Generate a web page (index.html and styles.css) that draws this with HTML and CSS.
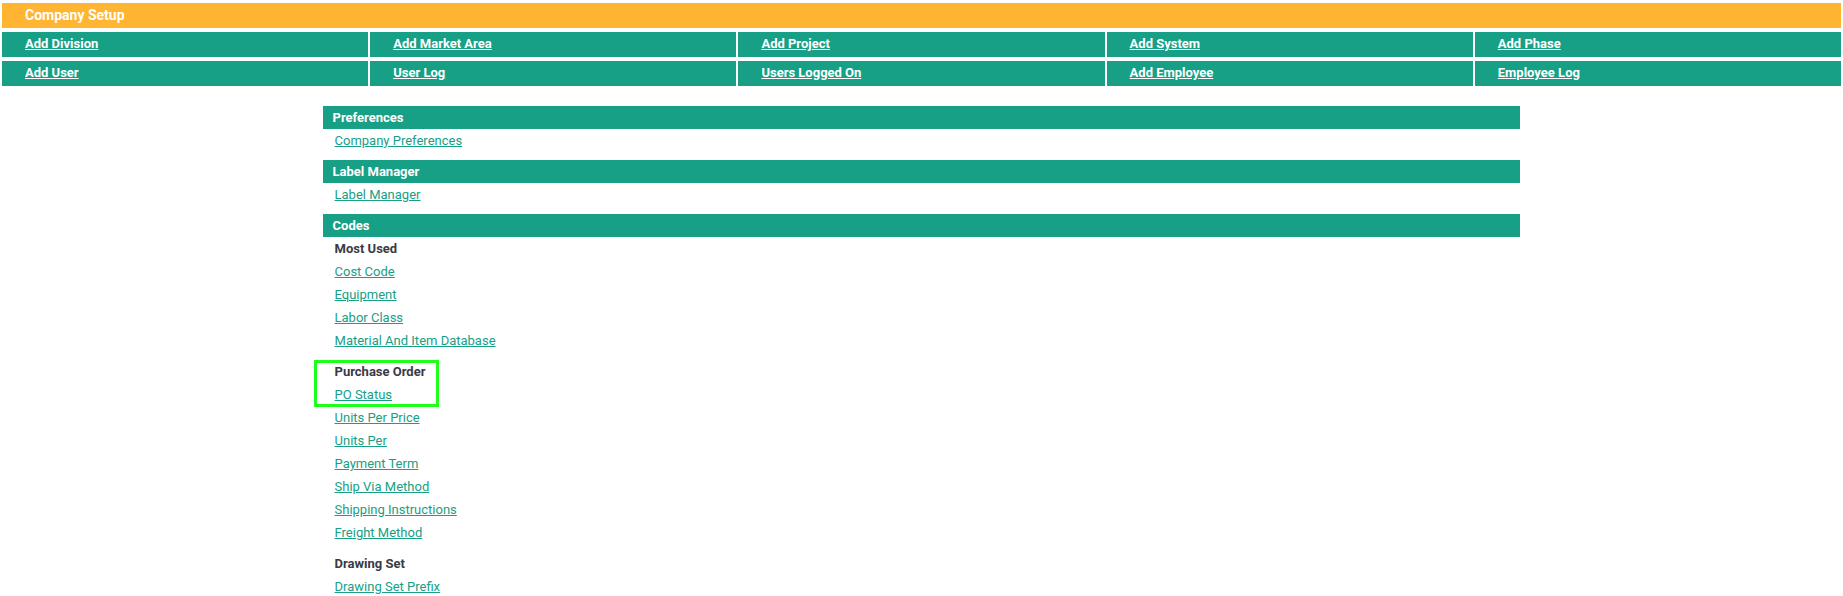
FILE: index.html
```html
<html>
	<head>
		<title>Company Setup</title>
		<meta charset="UTF-8">
		<meta name="viewport" content="width=device-width, initial-scale=1">
		<link rel="stylesheet" href="styles.css">
	</head>
	<body>
		<div class="setupBar">Company Setup</div>
		<div class="navGrid">
			<div class="navCell"><a href="#">Add Division</a></div>
			<div class="navCell"><a href="#">Add Market Area</a></div>
			<div class="navCell"><a href="#">Add Project</a></div>
			<div class="navCell"><a href="#">Add System</a></div>
			<div class="navCell"><a href="#">Add Phase</a></div>
			<div class="navCell"><a href="#">Add User</a></div>
			<div class="navCell"><a href="#">User Log</a></div>
			<div class="navCell"><a href="#">Users Logged On</a></div>
			<div class="navCell"><a href="#">Add Employee</a></div>
			<div class="navCell"><a href="#">Employee Log</a></div>
		</div>
		<div id="main">
			<div class="section">
				<div class="sectionHead">Preferences</div>
				<div class="group">
					<a class="item" href="#">Company Preferences</a>
				</div>
			</div>
			<div class="section">
				<div class="sectionHead">Label Manager</div>
				<div class="group">
					<a class="item" href="#">Label Manager</a>
				</div>
			</div>
			<div class="section">
				<div class="sectionHead">Codes</div>
				<div class="group">
					<div class="groupTitle">Most Used</div>
					<a class="item" href="#">Cost Code</a>
					<a class="item" href="#">Equipment</a>
					<a class="item" href="#">Labor Class</a>
					<a class="item" href="#">Material And Item Database</a>
				</div>
				<div class="group">
					<div class="marked">
						<div class="groupTitle">Purchase Order</div>
						<a class="item" href="#">PO Status</a>
					</div>
					<a class="item" href="#">Units Per Price</a>
					<a class="item" href="#">Units Per</a>
					<a class="item" href="#">Payment Term</a>
					<a class="item" href="#">Ship Via Method</a>
					<a class="item" href="#">Shipping Instructions</a>
					<a class="item" href="#">Freight Method</a>
				</div>
				<div class="group">
					<div class="groupTitle">Drawing Set</div>
					<a class="item" href="#">Drawing Set Prefix</a>
				</div>
			</div>
		</div>
	</body>
</html>
```

FILE: styles.css
```css
body {
	margin: 0;
	font-family: Roboto, "Liberation Sans", sans-serif;
	font-size: 13px;
	color: #333;
	background: #fff;
}
.setupBar {
	margin: 3px 2px 0 2px;
	height: 25px;
	line-height: 25px;
	padding-left: 23px;
	background: #ffb531;
	color: #fff;
	font-weight: bold;
	font-size: 14px;
}
.navGrid {
	display: grid;
	grid-template-columns: repeat(5, 1fr);
	column-gap: 2px;
	row-gap: 4px;
	padding: 4px 2px 0 2px;
}
.navCell {
	height: 25px;
	line-height: 24px;
	padding-left: 23px;
	background: #17a086;
}
.navCell a {
	color: #fff;
	font-weight: bold;
}
#main {
	width: 65%;
	margin: 20px auto 0 auto;
}
.section {
	margin-bottom: 8px;
}
.sectionHead {
	height: 23px;
	line-height: 23px;
	padding-left: 10px;
	background: #17a086;
	color: #fff;
	font-weight: bold;
}
.group {
	display: flex;
	flex-direction: column;
	align-items: flex-start;
}
.group + .group {
	margin-top: 8px;
}
.groupTitle {
	line-height: 23px;
	padding-left: 12px;
	font-weight: bold;
	color: #3a3a44;
}
.item {
	line-height: 23px;
	margin-left: 12px;
	color: #17a086;
}
.marked {
	position: relative;
	display: flex;
	flex-direction: column;
	align-items: flex-start;
}
.marked::after {
	content: "";
	position: absolute;
	left: -9px;
	top: 0;
	width: 119px;
	height: 41px;
	border: 3px solid #1eff1e;
}
```
